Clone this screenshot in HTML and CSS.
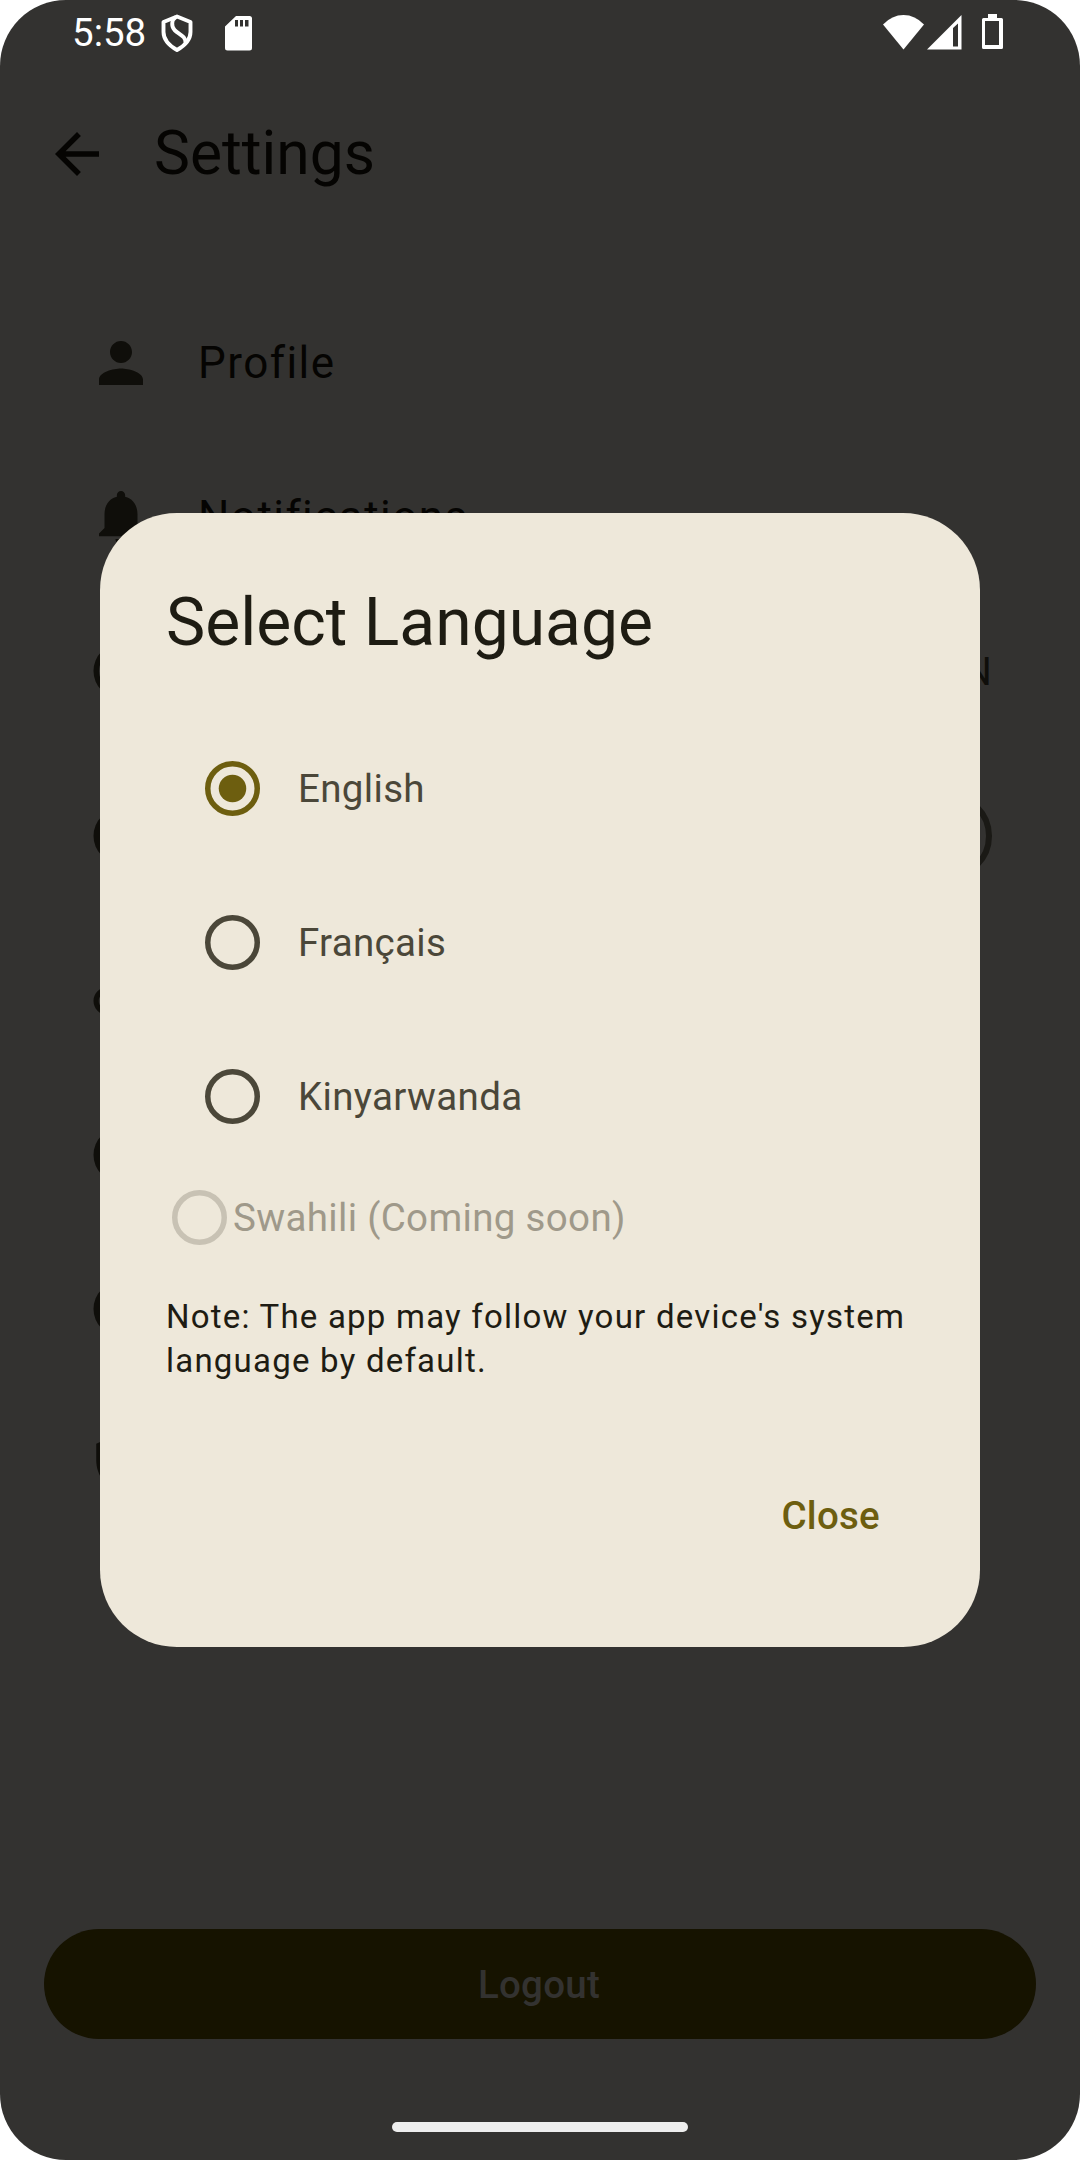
FILE: index.html
```html
<!DOCTYPE html>
<html lang="en">
<head>
<meta charset="utf-8">
<title>Settings</title>
<link rel="stylesheet" href="styles.css">
</head>
<body>
<div class="screen">
  <header class="status">
    <span class="clock">5:58</span>
    <svg class="shield" viewBox="0 0 32 38"><path d="M16 2.500L29.500 8V18C29.500 26 24 31.500 16 36 8 31.500 2.500 26 2.500 18V8z"/><path d="M15 3C10.500 6 10 12 13.500 16 18 20.500 25 22 24.500 29"/></svg>
    <svg class="card" viewBox="0 0 27 35"><path fill-rule="evenodd" d="M11 0H24.500Q27 0 27 2.500V32Q27 34.500 24.500 34.500H2.500Q0 34.500 0 32V10.500zM10 4v6.500h3V4zM15 4v6.500h3V4zM20 4v6.500h3.500V4z"/></svg>
    <svg class="wifi" viewBox="0 0 41 35"><path d="M0 9.500Q9 0 20.500 0T41 9.500L20.500 34.500z"/></svg>
    <svg class="signal" viewBox="0 0 35 35"><path fill-rule="evenodd" d="M0 34.500L34.500 0V34.500zM26 13V31.500H31V8.500z"/></svg>
    <svg class="battery" viewBox="0 0 21 35"><path fill-rule="evenodd" d="M6 0h9v4h4.500Q21 4 21 5.500V33.500Q21 35 19.500 35H1.500Q0 35 0 33.500V5.500Q0 4 1.500 4H6zM3 7v24h14V7z"/></svg>
  </header>
  <div class="appbar">
    <svg class="icon ink" viewBox="0 0 24 24"><path d="M20 11H7.830l5.590-5.590L12 4l-8 8 8 8 1.410-1.410L7.830 13H20v-2z"/></svg>
    <h1>Settings</h1>
  </div>
  <main class="list">
    <div class="item"><svg class="icon" viewBox="0 0 24 24"><path d="M12 12c2.210 0 4-1.790 4-4s-1.790-4-4-4-4 1.790-4 4 1.790 4 4 4zm0 2c-2.670 0-8 1.340-8 4v2h16v-2c0-2.660-5.330-4-8-4z"/></svg><span>Profile</span></div>
    <div class="item"><svg class="icon" viewBox="0 0 24 24"><path d="M12 22c1.100 0 2-.9 2-2h-4c0 1.100.89 2 2 2zm6-6v-5c0-3.070-1.640-5.640-4.500-6.320V4c0-.83-.67-1.500-1.500-1.500s-1.500.67-1.500 1.500v.68C7.630 5.360 6 7.920 6 11v5l-2 2v1h16v-1l-2-2z"/></svg><span>Notifications</span></div>
    <div class="item"><svg class="icon" viewBox="0 0 24 24"><path fill-rule="evenodd" d="M12 2a10 10 0 100 20 10 10 0 000-20zM4.260 14C4.100 13.360 4 12.690 4 12s.1-1.360.26-2h3.380a16.500 16.500 0 000 4z"/></svg><span>Language</span><em>EN</em></div>
    <div class="item tall"><svg class="icon" viewBox="0 0 24 24"><circle cx="12" cy="12" r="10"/></svg><span>Theme</span><i class="switch"></i></div>
    <div class="item"><svg class="icon" viewBox="0 0 24 24"><path d="M3.900 12c0-1.710 1.390-3.100 3.100-3.100h4V7H7c-2.760 0-5 2.240-5 5s2.240 5 5 5h4v-1.900H7c-1.710 0-3.100-1.390-3.100-3.100zM8 13h8v-2H8v2zm9-6h-4v1.900h4c1.710 0 3.100 1.390 3.100 3.100s-1.390 3.100-3.100 3.100h-4V17h4c2.760 0 5-2.240 5-5s-2.240-5-5-5z"/></svg><span>Share</span></div>
    <div class="item"><svg class="icon" viewBox="0 0 24 24"><circle cx="12" cy="12" r="10"/></svg><span>Help</span></div>
    <div class="item"><svg class="icon" viewBox="0 0 24 24"><circle cx="12" cy="12" r="10"/></svg><span>About</span></div>
    <div class="item"><svg class="icon" viewBox="0 0 24 24"><path d="M12 1L3 5v6c0 5.550 3.840 10.740 9 12 5.160-1.260 9-6.450 9-12V5l-9-4z"/></svg><span>Privacy</span></div>
  </main>
  <div class="logout">Logout</div>
  <div class="homebar"></div>

  <section class="dialog">
    <h2>Select Language</h2>
    <div class="option"><svg class="radio on" viewBox="0 0 20 20"><circle class="ring" cx="10" cy="10" r="9"/><circle class="dot" cx="10" cy="10" r="5"/></svg><span>English</span></div>
    <div class="option"><svg class="radio" viewBox="0 0 20 20"><circle class="ring" cx="10" cy="10" r="9"/></svg><span>Français</span></div>
    <div class="option"><svg class="radio" viewBox="0 0 20 20"><circle class="ring" cx="10" cy="10" r="9"/></svg><span>Kinyarwanda</span></div>
    <div class="option disabled"><svg class="radio" viewBox="0 0 20 20"><circle class="ring" cx="10" cy="10" r="9"/></svg><span>Swahili (Coming soon)</span></div>
    <p>Note: The app may follow your device's system language by default.</p>
    <div class="actions"><span>Close</span></div>
  </section>
</div>
</body>
</html>
```
FILE: styles.css
```css
* { box-sizing: border-box; }
body { margin: 0; background: #fff; font-family: Roboto, sans-serif; }
h1, h2, p { margin: 0; font-weight: 400; }
.screen {
  position: relative;
  width: 1080px;
  height: 2160px;
  display: flex;
  flex-direction: column;
  align-items: center;
  background: #333230;
  border-radius: 66px;
  overflow: hidden;
}
.status {
  width: 100%;
  height: 66px;
  display: flex;
  align-items: flex-start;
  padding: 14px 77px 0 72px;
  fill: #fff;
}
.clock { width: 74px; color: #fff; font-size: 38.500px; line-height: 38px; white-space: nowrap; }
.shield { width: 32px; height: 38px; margin-left: 15px; fill: none; stroke: #fff; stroke-width: 3.900; stroke-linejoin: round; }
.card { width: 27px; height: 35px; margin: 2px 0 0 32px; }
.wifi { width: 41px; height: 35px; margin: 1px 0 0 auto; }
.signal { width: 35px; height: 35px; margin: 1px 0 0 3px; }
.battery { width: 21px; height: 35px; margin-left: 20px; }
.appbar {
  width: 100%;
  height: 176px;
  display: flex;
  align-items: center;
  gap: 44px;
  padding: 0 44px;
  color: #050402;
}
h1 { font-size: 60.500px; line-height: 77px; padding-bottom: 2px; }
.icon { width: 66px; height: 66px; flex: none; fill: #0f0e0a; }
.icon.ink { fill: #050402; }
.list { width: 100%; padding: 44px 88px 0; color: #050402; }
.item { height: 154px; display: flex; align-items: center; gap: 44px; font-size: 44px; letter-spacing: 1.450px; }
.item.tall { height: 176px; }
.item em { margin-left: auto; font-style: normal; font-size: 38.500px; letter-spacing: .3px; color: #0f0e0a; }
.switch { margin-left: auto; width: 143px; height: 88px; border: 6px solid #1a1915; border-radius: 44px; }
.logout {
  width: 992px;
  height: 110px;
  margin-top: auto;
  padding-right: 2px;
  border-radius: 55px;
  background: #161300;
  color: #333230;
  font-size: 38.500px;
  font-weight: 500;
  letter-spacing: .275px;
  line-height: 112px;
  text-align: center;
}
.homebar { width: 296px; height: 10px; margin: 83px 0 28px; border-radius: 5px; background: #eee; }
.dialog {
  position: absolute;
  left: 100px;
  top: 513px;
  width: 880px;
  height: 1134px;
  padding: 66px;
  border-radius: 77px;
  background: #eee8da;
  color: #1e1c13;
}
h2 { font-size: 66px; line-height: 88px; margin-bottom: 44px; }
.option { height: 154px; display: flex; align-items: center; gap: 38px; padding-left: 39px; color: #4b4739; font-size: 38.500px; letter-spacing: .330px; }
.radio { width: 55px; height: 55px; flex: none; color: #4b4739; }
.ring { fill: none; stroke: currentColor; stroke-width: 2; }
.dot { fill: currentColor; }
.radio.on { color: #6d5e0f; }
.option.disabled { height: 88px; padding-left: 6px; gap: 6px; color: #9f998a; }
.disabled .radio { color: #c8c2b4; }
p { margin-top: 34px; font-size: 33px; line-height: 44px; letter-spacing: 1.220px; }
.actions { height: 132px; margin-top: 66px; display: flex; align-items: center; justify-content: flex-end; padding-right: 34px; color: #6d5e0f; font-size: 38.500px; font-weight: 500; letter-spacing: .275px; }
```
